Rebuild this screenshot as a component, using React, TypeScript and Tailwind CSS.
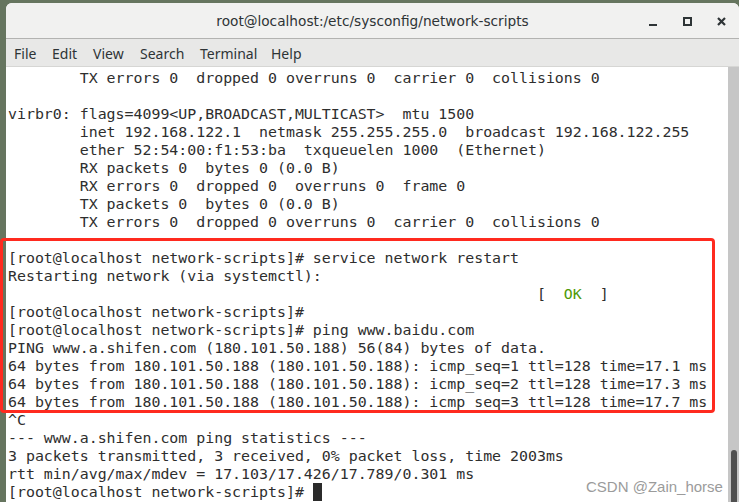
const lines: string[] = [
  "        TX errors 0  dropped 0 overruns 0  carrier 0  collisions 0",
  "",
  "virbr0: flags=4099<UP,BROADCAST,MULTICAST>  mtu 1500",
  "        inet 192.168.122.1  netmask 255.255.255.0  broadcast 192.168.122.255",
  "        ether 52:54:00:f1:53:ba  txqueuelen 1000  (Ethernet)",
  "        RX packets 0  bytes 0 (0.0 B)",
  "        RX errors 0  dropped 0  overruns 0  frame 0",
  "        TX packets 0  bytes 0 (0.0 B)",
  "        TX errors 0  dropped 0 overruns 0  carrier 0  collisions 0",
  "",
  "[root@localhost network-scripts]# service network restart",
  "Restarting network (via systemctl):",
  "__OK__",
  "[root@localhost network-scripts]# ",
  "[root@localhost network-scripts]# ping www.baidu.com",
  "PING www.a.shifen.com (180.101.50.188) 56(84) bytes of data.",
  "64 bytes from 180.101.50.188 (180.101.50.188): icmp_seq=1 ttl=128 time=17.1 ms",
  "64 bytes from 180.101.50.188 (180.101.50.188): icmp_seq=2 ttl=128 time=17.3 ms",
  "64 bytes from 180.101.50.188 (180.101.50.188): icmp_seq=3 ttl=128 time=17.7 ms",
  "^C",
  "--- www.a.shifen.com ping statistics ---",
  "3 packets transmitted, 3 received, 0% packet loss, time 2003ms",
  "rtt min/avg/max/mdev = 17.103/17.426/17.789/0.301 ms",
  "__PROMPT__",
];

// menu labels with the slot width each one takes in the bar
const menus: [string, string][] = [
  ["File", "w-[38px]"],
  ["Edit", "w-[41px]"],
  ["View", "w-[47px]"],
  ["Search", "w-[60px]"],
  ["Terminal", "w-[71px]"],
  ["Help", "w-[40px]"],
];

const Line = ({ text }: { text: string }) => {
  if (text === "__OK__") {
    return (
      <div className="h-[18px] whitespace-pre">
        {" ".repeat(59)}[  <span className="text-[#4e9a06]">OK</span>  ]
      </div>
    );
  }
  if (text === "__PROMPT__") {
    return (
      <div className="h-[18px] whitespace-pre flex items-start">
        <span>[root@localhost network-scripts]# </span>
        <span className="inline-block w-[9px] h-[18px] bg-[#2b2b2b]" />
      </div>
    );
  }
  return <div className="h-[18px] whitespace-pre">{text || " "}</div>;
};

export default function App() {
  return (
    <div className="relative w-[739px] h-[502px] overflow-hidden bg-[#66755f] pt-[3px] pl-[6px] flex flex-col">
      <div className="flex-1 flex flex-col rounded-t-[6px] overflow-hidden bg-white">
        {/* title bar */}
        <div className="relative h-[35px] shrink-0 bg-[#f1f1f0] flex items-center justify-center pt-[2px] font-['DejaVu_Sans',sans-serif] text-[13.7px] text-[#2e3436]">
          <span>root@localhost:/etc/sysconfig/network-scripts</span>
          <div className="absolute right-[13px] top-0 h-full flex items-center gap-[25px] pt-[1px]">
            <svg width="9" height="9" viewBox="0 0 9 9" className="mt-[1px]">
              <rect x="0" y="7" width="8" height="2" fill="#2e3436" />
            </svg>
            <svg width="9" height="9" viewBox="0 0 9 9">
              <rect x="1" y="1" width="7" height="7" fill="none" stroke="#2e3436" strokeWidth="2" />
            </svg>
            <svg width="9" height="9" viewBox="0 0 9 9">
              <path d="M1 1 L8 8 M8 1 L1 8" stroke="#2e3436" strokeWidth="2.2" />
            </svg>
          </div>
        </div>
        <div className="h-px shrink-0 bg-[#b3b3b1]" />
        {/* menu bar */}
        <div className="h-[27px] shrink-0 bg-[#e8e8e7] flex items-center pl-[8px] pt-[1px] font-['Noto_Sans',sans-serif] text-[14px] text-[#2e3436]">
          {menus.map(([m, w]) => (
            <span key={m} className={w}>
              {m}
            </span>
          ))}
        </div>
        <div className="h-px shrink-0 bg-[#d6d6d4]" />
        {/* terminal */}
        <div className="flex-1 flex min-h-0">
          <div className="flex-1 bg-white pt-[2px] pl-[2px] font-['DejaVu_Sans_Mono',monospace] text-[14.9px] leading-[18px] text-[#2e2e2e] overflow-hidden">
            {lines.map((l, i) => (
              <Line key={i} text={l} />
            ))}
          </div>
          <div className="w-[11px] bg-[#c6c6c6] flex flex-col justify-end items-center">
            <div className="w-[6px] h-[54px] rounded-full bg-[#505050] mb-[-2px]" />
          </div>
        </div>
      </div>

      {/* red highlight box */}
      <div className="absolute left-0 top-[238px] w-[715px] h-[175px] border-[3px] border-[#ff2a1f] rounded-[4px] pointer-events-none" />

      {/* watermark */}
      <div className="absolute left-[586px] top-[478px] font-['Liberation_Sans',sans-serif] text-[15px] leading-[18px] text-[#9b9b9b]">
        CSDN @Zain_horse
      </div>
    </div>
  );
}
